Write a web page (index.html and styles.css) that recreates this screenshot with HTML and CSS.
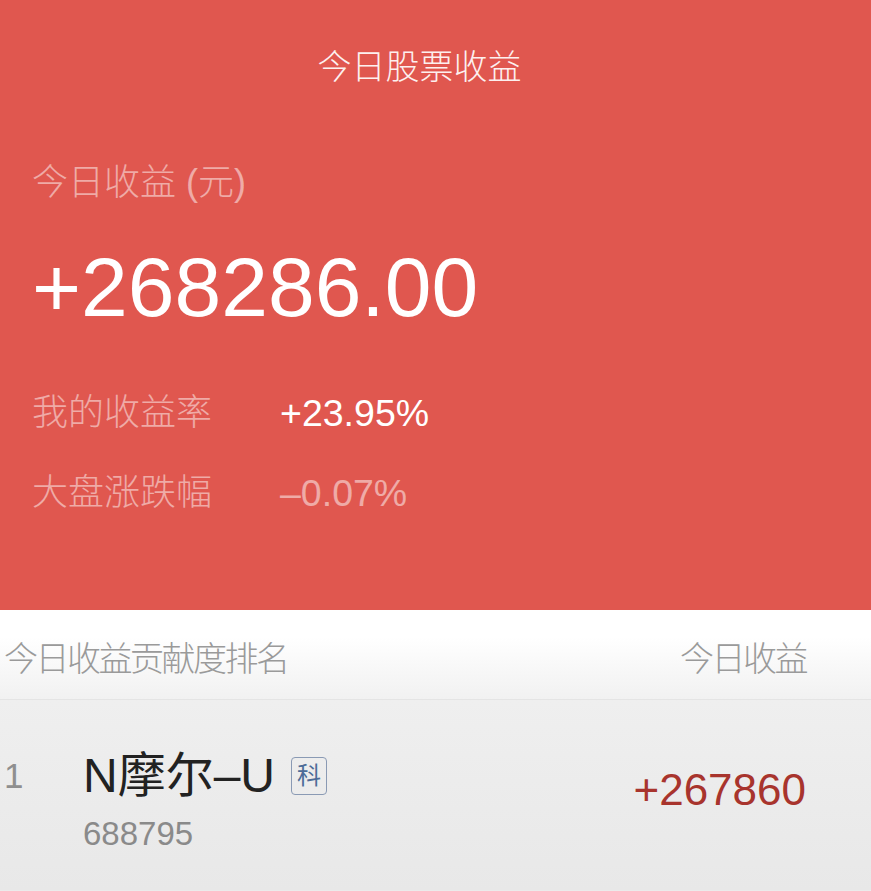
FILE: index.html
```html
<!DOCTYPE html>
<html lang="zh-CN">
<head>
  <meta charset="UTF-8" />
  <meta name="viewport" content="width=device-width, initial-scale=1" />
  <title>今日股票收益</title>
  <link rel="stylesheet" href="styles.css">
</head>
<body>
  <section class="hero">
    <header class="hero-title">今日股票收益</header>

    <div class="profit-label">今日收益 (元)</div>
    <div class="profit-value">+268286.00</div>

    <div class="stat-row first">
      <span class="stat-name">我的收益率</span>
      <span class="stat-value up">+23.95%</span>
    </div>
    <div class="stat-row">
      <span class="stat-name">大盘涨跌幅</span>
      <span class="stat-value muted">–0.07%</span>
    </div>
  </section>

  <div class="rank-head">
    <span>今日收益贡献度排名</span>
    <span>今日收益</span>
  </div>

  <ul class="rank-list">
    <li class="rank-item">
      <span class="rank-num">1</span>
      <div class="stock">
        <div class="stock-name">N摩尔–U <span class="badge">科</span></div>
        <div class="stock-code">688795</div>
      </div>
      <span class="stock-profit">+267860</span>
    </li>
  </ul>
</body>
</html>
```

FILE: styles.css
```css
/* Basics */
* {
  box-sizing: border-box;
}
body {
  margin: 0;
  background: #ebebeb;
  font-family: "Liberation Sans", "Noto Sans CJK SC", sans-serif;
  overflow: hidden;
}

/* Red summary block */
.hero {
  height: 610px;
  background: #e0574f;
  color: #fff;
  padding-left: 32px;
}
.hero-title {
  height: 134px;
  line-height: 134px;
  text-align: center;
  font-size: 34px;
  font-weight: 300;
  margin-left: -32px;
  padding-right: 32px;
  color: #fdf0ef;
}
.profit-label {
  margin-top: 29px;
  line-height: 40px;
  font-size: 36px;
  font-weight: 300;
  color: rgba(255, 255, 255, 0.5);
}
.profit-value {
  margin-top: 34px;
  line-height: 100px;
  font-size: 84px;
  color: #fff;
}
.stat-row {
  display: flex;
  align-items: center;
  line-height: 50px;
  margin-top: 30px;
}
.stat-row.first {
  margin-top: 51px;
}
.stat-name {
  width: 248px;
  font-size: 36px;
  font-weight: 300;
  color: rgba(255, 255, 255, 0.5);
}
.stat-value {
  font-size: 37.5px;
}
.stat-value.up {
  color: #fff;
}
.stat-value.muted {
  color: rgba(255, 255, 255, 0.5);
}

/* Ranking header */
.rank-head {
  height: 90px;
  display: flex;
  align-items: center;
  justify-content: space-between;
  padding: 4px 65px 0 4px;
  background: linear-gradient(#ffffff 30%, #f1f1f1);
  border-bottom: 1px solid #e4e4e4;
  font-size: 34px;
  font-weight: 300;
  letter-spacing: -2.5px;
  color: #9a9a9a;
}

/* Ranking list */
.rank-list {
  list-style: none;
  margin: 0;
  padding: 0;
}
.rank-item {
  display: flex;
  align-items: flex-start;
  height: 190px;
  padding: 46px 65px 0 4px;
  background: linear-gradient(#efefef, #e8e8e8);
}
.rank-num {
  width: 79px;
  font-size: 35px;
  line-height: 60px;
  color: #8f8f8f;
}
.stock {
  flex: 1;
}
.stock-name {
  display: flex;
  align-items: center;
  font-size: 48px;
  line-height: 60px;
  color: #222;
}
.badge {
  display: inline-flex;
  align-items: center;
  justify-content: center;
  width: 36px;
  height: 38px;
  margin-left: 16px;
  border: 1.5px solid #8a9ab4;
  border-radius: 4px;
  font-size: 24px;
  line-height: 1;
  color: #4d6c98;
}
.stock-code {
  margin-top: 8px;
  font-size: 33px;
  line-height: 40px;
  color: #8a8a8a;
}
.stock-profit {
  margin-top: 19px;
  font-size: 44px;
  line-height: 50px;
  color: #a8342d;
}
```
